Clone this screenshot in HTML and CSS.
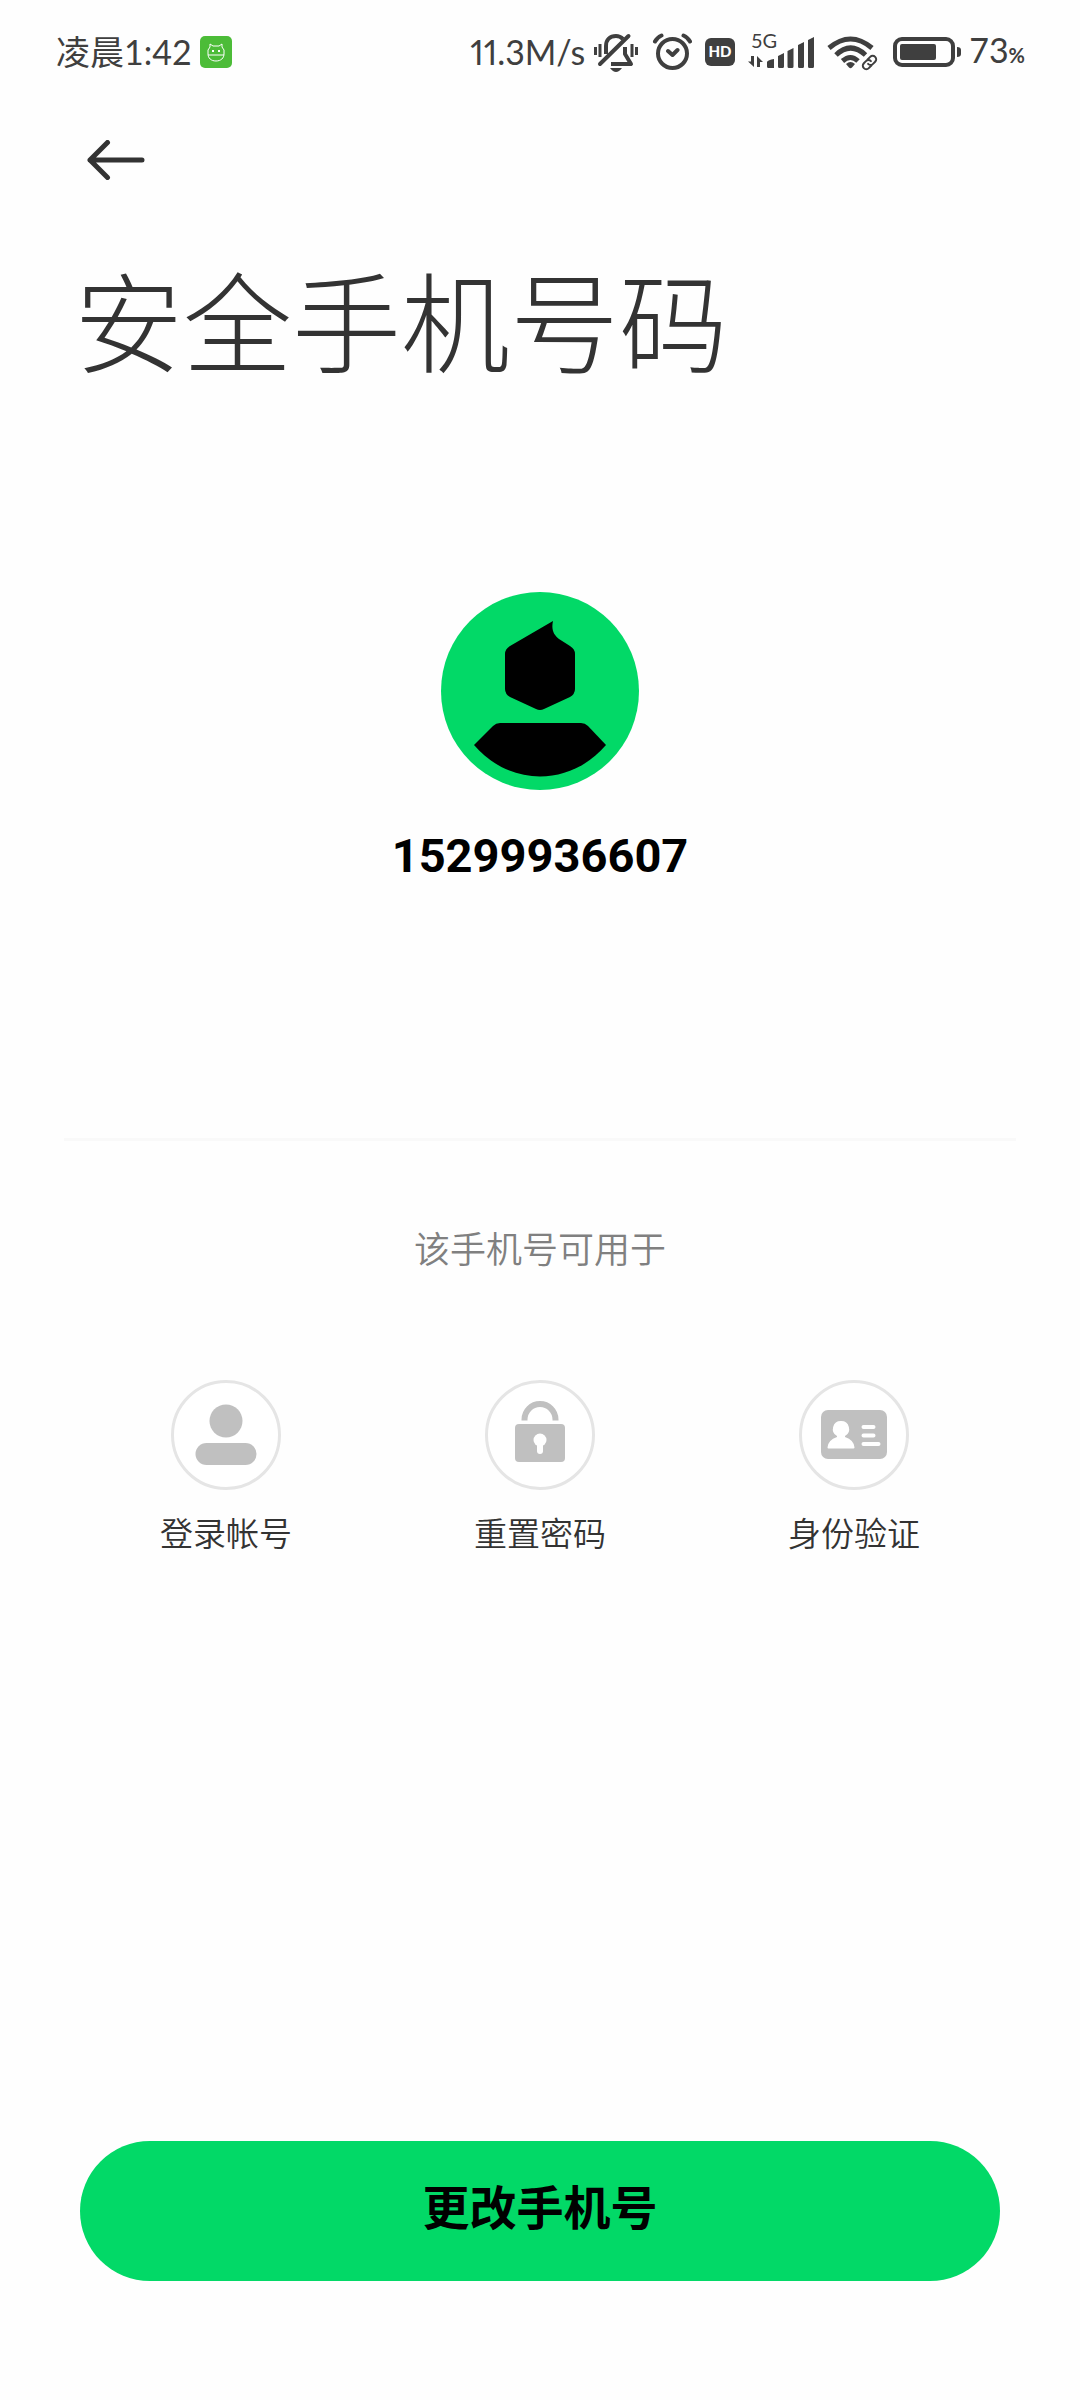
FILE: index.html
```html
<!DOCTYPE html>
<html lang="zh-CN">
<head>
<meta charset="utf-8">
<meta name="viewport" content="width=device-width, initial-scale=1">
<title>安全手机号码</title>
<link rel="stylesheet" href="styles.css">
</head>
<body>
<div class="status-bar">
  <span class="clock">凌晨1:42</span>
  <svg class="app-badge" width="32" height="32" viewBox="0 0 32 32" aria-hidden="true">
    <rect width="32" height="32" rx="5" fill="#4cbc38"/>
    <g fill="none" stroke="#fff" stroke-width="1" stroke-linejoin="round">
      <path d="M8 18v-4l2-3V8l3 2h6l3-2v3l2 3v4c0 4-3 7-8 7s-8-3-8-7zM8 19h16"/>
    </g>
    <path d="M12 14h2v2h-2zM18 14h2v2h-2z" fill="#fff"/>
  </svg>
  <div class="indicators">
    <span class="speed">11.3M/s</span>
    <svg width="46" height="48" viewBox="0 0 46 48" aria-hidden="true">
      <g fill="none" stroke="#3f3f3f" stroke-width="4" stroke-linecap="round" stroke-linejoin="round">
        <path d="M7 36 35.500 8"/>
        <path d="M13 26v-8c0-6 4-10 10-10 3 0 5 1 7 3" stroke-linecap="butt"/>
        <path d="M32 19v7l6 10H18" stroke-linecap="butt"/>
      </g>
      <path d="M2.500 19v8M7 16v13M39 16v13M43.500 19v8" stroke="#3f3f3f" stroke-width="3"/>
      <path d="M17 40h12q-3 4-6 4t-6-4z" fill="#3f3f3f"/>
    </svg>
    <svg width="41" height="48" viewBox="0 0 41 48" aria-hidden="true">
      <g fill="none" stroke="#3f3f3f" stroke-width="4" stroke-linecap="round" stroke-linejoin="round">
        <circle cx="21.500" cy="25.500" r="14.500"/>
        <path d="m17 23 4.500 4 5-5M4 13.500q2-4 6.500-6M39 13.500q-2-4-6.500-6"/>
      </g>
    </svg>
    <svg width="32" height="48" viewBox="0 0 32 48" aria-hidden="true">
      <rect x="1" y="10" width="30" height="28" rx="6" fill="#3f3f3f"/>
      <text class="hd" x="16" y="29" text-anchor="middle">HD</text>
    </svg>
    <svg width="66" height="48" viewBox="0 0 66 48" aria-hidden="true">
      <text class="net" x="3" y="20">5G</text>
      <g fill="#3f3f3f">
        <path d="M19 34q1-2 7-3v9h-5.500q-1.500 0-1.500-1.500zM30 28l6-3v13.500q0 1.500-1.500 1.500h-3q-1.500 0-1.500-1.500zM39.500 23l6-3v18.500q0 1.500-1.500 1.500h-3q-1.500 0-1.500-1.500zM50 17l6-3v24.500q0 1.500-1.500 1.500h-3q-1.500 0-1.500-1.500zM60 12l6-3v29.500q0 1.500-1.500 1.500h-3q-1.500 0-1.500-1.500z"/>
        <path d="M3 28h3v11L0 33.500h3zM9 39h3v-5h3L9 28z"/>
      </g>
    </svg>
    <svg width="53" height="48" viewBox="0 0 53 48" aria-hidden="true">
      <g fill="none" stroke="#3f3f3f" stroke-width="5">
        <path d="M3 20q21.500-18 43 0M10 27q14.500-14 29.500 0M16.500 33q8-7 15.500 0"/>
      </g>
      <path d="M20 36q4.500-4 9 0l-3 3.500q-1.500 1.500-3 0z" fill="#3f3f3f"/>
      <g fill="none" stroke-linecap="round" transform="rotate(-45 43.500 34.500)">
        <path stroke="#3f3f3f" stroke-width="2" d="M43 38h-4a3.500 3.500 0 0 1 0-7h3a3.500 3.500 0 0 1 3.500 3.500M44 31h4a3.500 3.500 0 0 1 0 7h-3a3.500 3.500 0 0 1-3.500-3.500"/>
      </g>
    </svg>
    <svg width="70" height="48" viewBox="0 0 70 48" aria-hidden="true">
      <rect x="4" y="11" width="58" height="26" rx="7" fill="none" stroke="#3f3f3f" stroke-width="4"/>
      <rect x="9" y="16" width="36" height="16" rx="2" fill="#3f3f3f"/>
      <path d="M66 19q4 0 4 3v4q0 3-4 3z" fill="#3f3f3f"/>
    </svg>
    <span class="battery">73<small>%</small></span>
  </div>
</div>

<header class="page-header">
  <button class="back" type="button" aria-label="返回">
    <svg width="58" height="40" viewBox="0 0 58 40" aria-hidden="true">
      <path d="M55 20H3M20.500 2.500 3 20l17.500 17.500" fill="none" stroke="#333" stroke-width="5" stroke-linecap="round" stroke-linejoin="round"/>
    </svg>
  </button>
  <h1>安全手机号码</h1>
</header>

<main>
  <section class="account">
    <svg class="avatar" width="198" height="198" viewBox="0 0 198 198" aria-hidden="true">
      <circle cx="99" cy="99" r="99" fill="#02d967"/>
      <path d="M112 29c-2 9 1 14 6 18l11 7q5 3 5 8v35q0 5-5 8l-26 12q-4 2-8 0l-26-12q-5-3-5-8V62q0-5 5-8z"/>
      <path d="M59 131h81q4 0 7 3l18 19c-36 42-96 42-132 0l19-19q3-3 7-3z"/>
    </svg>
    <p class="phone">15299936607</p>
  </section>
  <section class="uses">
    <h2>该手机号可用于</h2>
    <ul class="use-list">
      <li>
        <svg width="110" height="110" viewBox="0 0 110 110" aria-hidden="true">
          <circle class="ring" cx="55" cy="55" r="53.500"/>
          <g fill="#c0c0c0"><circle cx="55" cy="41" r="16.500"/><rect x="24.500" y="63" width="61" height="22" rx="11"/></g>
        </svg>
        <span>登录帐号</span>
      </li>
      <li>
        <svg width="110" height="110" viewBox="0 0 110 110" aria-hidden="true">
          <circle class="ring" cx="55" cy="55" r="53.500"/>
          <path d="M39.500 40.500v-1a15.500 15.500 0 0 1 31 0v1" fill="none" stroke="#c0c0c0" stroke-width="6"/>
          <rect x="30" y="44" width="50" height="38" rx="4" fill="#c0c0c0"/>
          <circle cx="55" cy="60" r="6.500" fill="#fff"/>
          <path d="M55 62v9" stroke="#fff" stroke-width="6" stroke-linecap="round"/>
        </svg>
        <span>重置密码</span>
      </li>
      <li>
        <svg width="110" height="110" viewBox="0 0 110 110" aria-hidden="true">
          <circle class="ring" cx="55" cy="55" r="53.500"/>
          <rect x="22" y="30" width="66" height="49" rx="7" fill="#c0c0c0"/>
          <path d="M42 41a8 8 0 0 1 4 15v1q9 3 9.500 10.500 0 1-1 1h-25q-1 0-1-1Q29 60 38 57v-1a8 8 0 0 1 4-15z" fill="#fff"/>
          <path d="M64.500 47h10M64.500 55.500h10M64.500 64h15" stroke="#fff" stroke-width="4" stroke-linecap="round"/>
        </svg>
        <span>身份验证</span>
      </li>
    </ul>
  </section>
</main>

<footer class="actions">
  <button class="primary" type="button">更改手机号</button>
</footer>
</body>
</html>
```
FILE: styles.css
```css
* {
  box-sizing: border-box;
  margin: 0;
  padding: 0;
}

body {
  display: flex;
  flex-direction: column;
  min-height: 100vh;
  background: #fefefe;
  color: #333;
  font-family: Roboto, "Noto Sans CJK SC", sans-serif;
}

svg {
  display: block;
  flex: none;
}

button {
  border: 0;
  background: none;
  font: inherit;
  color: inherit;
  cursor: pointer;
}

.status-bar {
  display: flex;
  align-items: center;
  height: 104px;
  padding: 0 55px 0 56px;
  color: #3f3f3f;
  font-family: Lato, "Noto Sans CJK SC", sans-serif;
  font-size: 34px;
  line-height: 48px;
  white-space: nowrap;
}

.app-badge {
  margin-left: 8px;
}

.indicators {
  display: flex;
  align-items: center;
  gap: 12px;
  margin-left: auto;
}

.speed {
  margin-right: -4px;
  font-variant-numeric: proportional-nums;
}

.battery {
  margin-left: -4px;
}

.battery small {
  font-size: 20px;
  font-weight: 700;
}

.hd {
  fill: #fff;
  font-size: 15px;
  font-weight: 900;
}

.net {
  fill: #3f3f3f;
  font-size: 20px;
}

.page-header {
  padding: 36px 74px 0;
}

.back {
  display: block;
  padding: 0 13px;
}

h1 {
  margin-top: 68px;
  font-size: 109px;
  font-weight: 300;
  line-height: 160px;
}

.account {
  display: flex;
  flex-direction: column;
  align-items: center;
  margin: 0 64px;
  padding: 184px 0 252px;
  border-bottom: 3px solid #f9f9f9;
}

.phone {
  margin-top: 36px;
  color: #000;
  font-size: 47px;
  font-weight: 700;
  line-height: 60px;
}

.uses {
  padding: 83px 69px 0;
}

h2 {
  color: #808080;
  font-size: 36px;
  font-weight: 350;
  line-height: 54px;
  text-align: center;
}

.use-list {
  display: grid;
  grid-template-columns: repeat(3, 1fr);
  margin-top: 102px;
  list-style: none;
}

.use-list li {
  display: flex;
  flex-direction: column;
  align-items: center;
  gap: 21px;
  font-size: 33px;
  font-weight: 350;
  line-height: 48px;
}

.ring {
  fill: #fff;
  stroke: #e5e5e5;
  stroke-width: 3px;
}

.actions {
  margin-top: auto;
  padding: 80px 80px 119px;
}

.primary {
  width: 100%;
  height: 140px;
  padding-bottom: 14px;
  border-radius: 70px;
  background: #02d967;
  color: #000;
  font-size: 47px;
  font-weight: 700;
}
```
